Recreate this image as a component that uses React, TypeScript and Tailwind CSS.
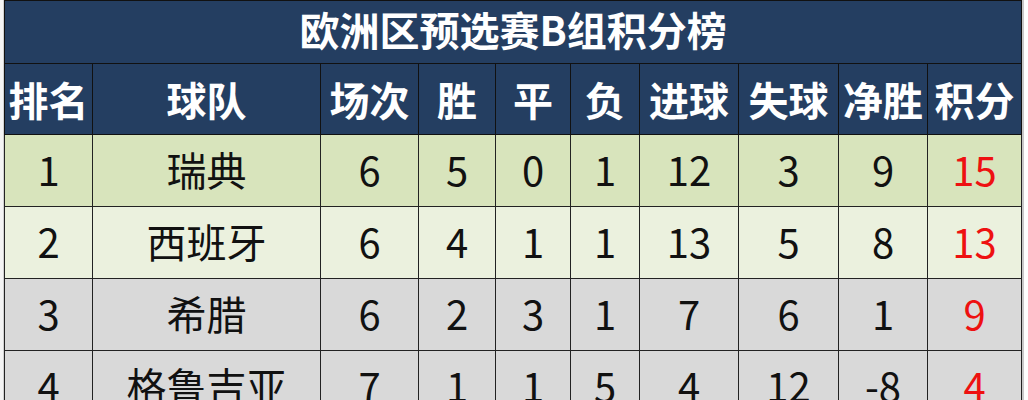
import React from "react";

const widths = [88, 228, 98, 77, 75, 69, 99, 100, 89, 94];
const headers = ["排名", "球队", "场次", "胜", "平", "负", "进球", "失球", "净胜", "积分"];
const rows: { cells: (string | number)[]; bg: string }[] = [
  { cells: [1, "瑞典", 6, 5, 0, 1, 12, 3, 9, 15], bg: "bg-[#d8e4bc]" },
  { cells: [2, "西班牙", 6, 4, 1, 1, 13, 5, 8, 13], bg: "bg-[#ebf1de]" },
  { cells: [3, "希腊", 6, 2, 3, 1, 7, 6, 1, 9], bg: "bg-[#d9d9d9]" },
  { cells: [4, "格鲁吉亚", 7, 1, 1, 5, 4, 12, -8, 4], bg: "bg-[#d9d9d9]" },
];

const font = { fontFamily: '"Noto Sans CJK SC", "Noto Sans", sans-serif' };

export default function App() {
  return (
    <div className="w-[1028px] h-[400px] overflow-hidden bg-white flex" style={font}>
      <div className="w-[4px] shrink-0 bg-[#f4f4f4] border-r border-[#d0d0d0]" />
      <table className="table-fixed border-collapse shrink-0" style={{ width: 1017 }}>
        <colgroup>
          {widths.map((w, i) => (
            <col key={i} style={{ width: w }} />
          ))}
        </colgroup>
        <tbody>
          <tr className="h-[63px] bg-[#243e61]">
            <td
              colSpan={10}
              className="border border-[#111] text-center text-white font-bold text-[40px] leading-none p-0 pb-[6px]"
            >
              欧洲区预选赛B组积分榜
            </td>
          </tr>
          <tr className="h-[71px] bg-[#243e61]">
            {headers.map((h, i) => (
              <td
                key={i}
                className="border border-[#111] text-center text-white font-bold text-[40px] leading-none p-0 whitespace-nowrap"
              >
                {h}
              </td>
            ))}
          </tr>
          {rows.map((r, ri) => (
            <tr key={ri} className={`h-[72px] ${r.bg}`}>
              {r.cells.map((c, ci) => (
                <td
                  key={ci}
                  className={`border border-[#222] text-center text-[40px] leading-none p-0 pb-[4px] whitespace-nowrap ${
                    ci === 9 ? "text-[#ee1111]" : "text-[#111]"
                  }`}
                >
                  {c}
                </td>
              ))}
            </tr>
          ))}
        </tbody>
      </table>
      <div className="flex-1 border-l-2 border-[#c8c8c8]" />
    </div>
  );
}
